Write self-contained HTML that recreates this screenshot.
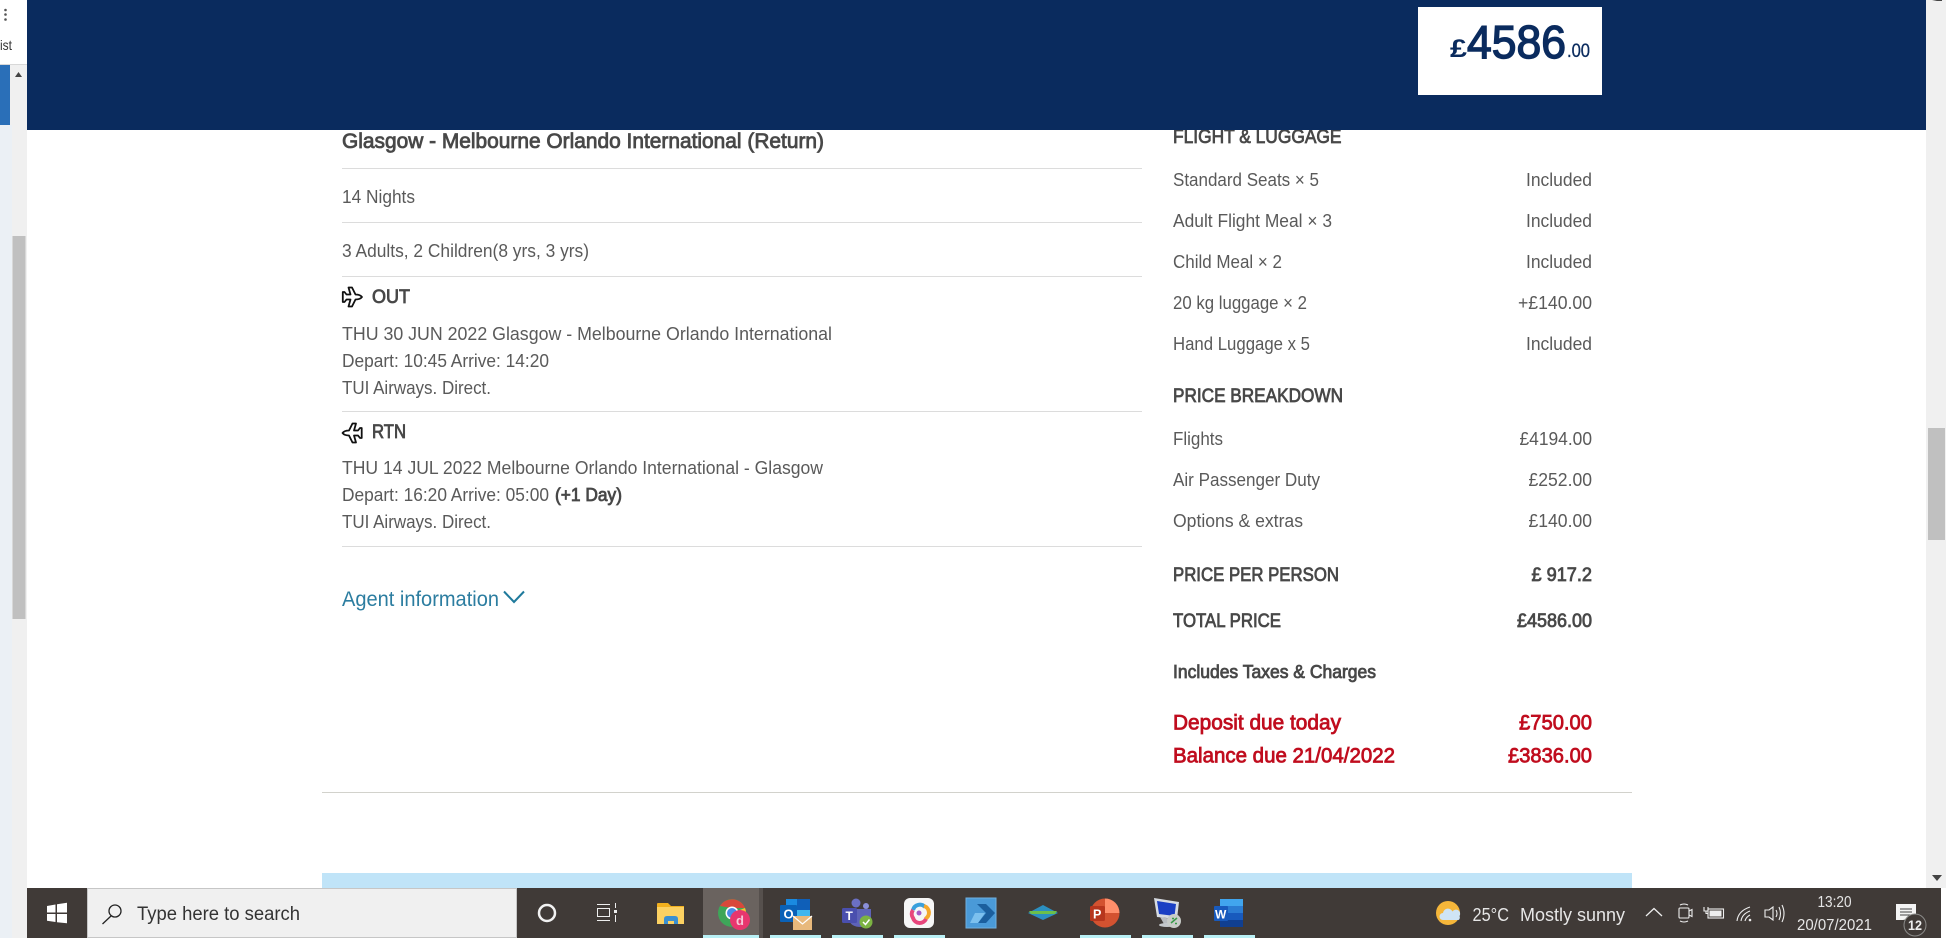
<!DOCTYPE html>
<html><head><meta charset="utf-8"><title>Booking summary</title>
<style>
html,body{margin:0;padding:0;background:#fff;width:1946px;height:938px;overflow:hidden}
svg{display:block}
text{font-family:"Liberation Sans",sans-serif;fill:#5a5a5a;font-size:18px}
.b{fill:#484848;stroke:#484848;stroke-width:.8px}
.r{fill:#c00d1e;stroke:#c00d1e;stroke-width:.8px;font-size:21.500px}
.t{fill:#e6e6e6}
.ic{filter:blur(.35px)}
</style></head><body>
<svg xmlns="http://www.w3.org/2000/svg" width="1946" height="938" viewBox="0 0 1946 938">
<rect width="1946" height="938" fill="#fff"/>
<!-- left strip -->
<rect x="0" y="64" width="27" height="874" fill="#f0f0f0"/>
<rect x="0" y="125" width="12" height="813" fill="#ebf0f5"/>
<rect x="0" y="64" width="27" height="1" fill="#d8d8d8"/>
<rect x="0" y="65" width="10" height="60" fill="#2a6fb8"/>
<path d="M15 77L18.500 72L22 77Z" fill="#444"/>
<rect x="12.500" y="236" width="13" height="383" fill="#c0c0c0"/>
<circle cx="5.500" cy="10" r="1.300" fill="#555"/><circle cx="5.500" cy="14.500" r="1.300" fill="#555"/><circle cx="5.500" cy="19.500" r="1.300" fill="#555"/>
<text x="0" y="50" style="font-size:14px;fill:#333" textLength="12" lengthAdjust="spacingAndGlyphs">ist</text>
<!-- right scrollbar -->
<rect x="1926" y="0" width="20" height="938" fill="#f0f0f0"/>
<rect x="1928" y="428" width="17" height="112" fill="#c0c0c0"/>
<path d="M1932 1L1937 0H1942V1Z" fill="#444"/>
<path d="M1932 875L1942 875L1937 881Z" fill="#444"/>

<!-- left column -->
<text class="b" x="342" y="148" style="font-size:21px" textLength="482" lengthAdjust="spacingAndGlyphs">Glasgow - Melbourne Orlando International (Return)</text>
<g fill="#dcdcdc">
<rect x="342" y="168" width="800" height="1"/><rect x="342" y="222" width="800" height="1"/><rect x="342" y="276" width="800" height="1"/><rect x="342" y="411" width="800" height="1"/><rect x="342" y="546" width="800" height="1"/>
</g>
<text x="342" y="203" textLength="73" lengthAdjust="spacingAndGlyphs">14 Nights</text>
<text x="342" y="257" textLength="247" lengthAdjust="spacingAndGlyphs">3 Adults, 2 Children(8 yrs, 3 yrs)</text>
<path transform="translate(342 287)" d="M20 10C18.500 8 15.500 7.500 13.500 7.500L10 .5H6.500L8.500 7.500H4.500L2.500 5H.8V15H2.500L4.500 12.500H8.500L6.500 19.500H10L13.500 12.500C15.500 12.500 18.500 12 20 10Z" fill="#fff" stroke="#111" stroke-width="1.800" stroke-linejoin="round"/>
<text class="b" x="372" y="303" style="font-size:19px" textLength="38" lengthAdjust="spacingAndGlyphs">OUT</text>
<text x="342" y="340" textLength="490" lengthAdjust="spacingAndGlyphs">THU 30 JUN 2022 Glasgow  - Melbourne Orlando International</text>
<text x="342" y="367" textLength="207" lengthAdjust="spacingAndGlyphs">Depart: 10:45 Arrive: 14:20</text>
<text x="342" y="394" textLength="149" lengthAdjust="spacingAndGlyphs">TUI Airways. Direct.</text>
<path transform="translate(362.500 423) scale(-1 1)" d="M20 10C18.500 8 15.500 7.500 13.500 7.500L10 .5H6.500L8.500 7.500H4.500L2.500 5H.8V15H2.500L4.500 12.500H8.500L6.500 19.500H10L13.500 12.500C15.500 12.500 18.500 12 20 10Z" fill="#fff" stroke="#111" stroke-width="1.800" stroke-linejoin="round"/>
<text class="b" x="372" y="438" style="font-size:19px" textLength="34" lengthAdjust="spacingAndGlyphs">RTN</text>
<text x="342" y="474" textLength="481" lengthAdjust="spacingAndGlyphs">THU 14 JUL 2022 Melbourne Orlando International - Glasgow</text>
<text x="342" y="501" textLength="207" lengthAdjust="spacingAndGlyphs">Depart: 16:20 Arrive: 05:00</text>
<text class="b" x="555" y="501" textLength="67" lengthAdjust="spacingAndGlyphs">(+1 Day)</text>
<text x="342" y="528" textLength="149" lengthAdjust="spacingAndGlyphs">TUI Airways. Direct.</text>
<text x="342" y="606" style="font-size:21px;fill:#2c7da0" textLength="157" lengthAdjust="spacingAndGlyphs">Agent information</text>
<path d="M504 591.500L514 602L524 591.500" fill="none" stroke="#1f7a9c" stroke-width="2"/>

<!-- right column -->
<text class="b" x="1173" y="143" style="font-size:19.500px" textLength="168.500" lengthAdjust="spacingAndGlyphs">FLIGHT &amp; LUGGAGE</text>
<text x="1173" y="186" textLength="146" lengthAdjust="spacingAndGlyphs">Standard Seats × 5</text>
<text x="1526" y="186" textLength="66" lengthAdjust="spacingAndGlyphs">Included</text>
<text x="1173" y="227" textLength="159" lengthAdjust="spacingAndGlyphs">Adult Flight Meal × 3</text>
<text x="1526" y="227" textLength="66" lengthAdjust="spacingAndGlyphs">Included</text>
<text x="1173" y="268" textLength="109" lengthAdjust="spacingAndGlyphs">Child Meal × 2</text>
<text x="1526" y="268" textLength="66" lengthAdjust="spacingAndGlyphs">Included</text>
<text x="1173" y="309" textLength="134" lengthAdjust="spacingAndGlyphs">20 kg luggage × 2</text>
<text x="1518" y="309" textLength="74" lengthAdjust="spacingAndGlyphs">+£140.00</text>
<text x="1173" y="350" textLength="137" lengthAdjust="spacingAndGlyphs">Hand Luggage x 5</text>
<text x="1526" y="350" textLength="66" lengthAdjust="spacingAndGlyphs">Included</text>
<text class="b" x="1173" y="402" style="font-size:19.500px" textLength="170" lengthAdjust="spacingAndGlyphs">PRICE BREAKDOWN</text>
<text x="1173" y="445" textLength="50" lengthAdjust="spacingAndGlyphs">Flights</text>
<text x="1519.500" y="445" textLength="72.500" lengthAdjust="spacingAndGlyphs">£4194.00</text>
<text x="1173" y="486" textLength="147" lengthAdjust="spacingAndGlyphs">Air Passenger Duty</text>
<text x="1528.500" y="486" textLength="63.500" lengthAdjust="spacingAndGlyphs">£252.00</text>
<text x="1173" y="527" textLength="130" lengthAdjust="spacingAndGlyphs">Options &amp; extras</text>
<text x="1528.500" y="527" textLength="63.500" lengthAdjust="spacingAndGlyphs">£140.00</text>
<text class="b" x="1173" y="581" style="font-size:19.500px" textLength="166" lengthAdjust="spacingAndGlyphs">PRICE PER PERSON</text>
<text class="b" x="1531.500" y="581" style="font-size:19.500px" textLength="60.500" lengthAdjust="spacingAndGlyphs">£ 917.2</text>
<text class="b" x="1173" y="627" style="font-size:19.500px" textLength="108" lengthAdjust="spacingAndGlyphs">TOTAL PRICE</text>
<text class="b" x="1517" y="627" style="font-size:19.500px" textLength="75" lengthAdjust="spacingAndGlyphs">£4586.00</text>
<text class="b" x="1173" y="678" style="font-size:18px" textLength="203" lengthAdjust="spacingAndGlyphs">Includes Taxes &amp; Charges</text>
<text class="r" x="1173" y="729.500" textLength="168" lengthAdjust="spacingAndGlyphs">Deposit due today</text>
<text class="r" x="1519" y="729.500" textLength="73" lengthAdjust="spacingAndGlyphs">£750.00</text>
<text class="r" x="1173" y="762.500" textLength="222" lengthAdjust="spacingAndGlyphs">Balance due 21/04/2022</text>
<text class="r" x="1508" y="762.500" textLength="84" lengthAdjust="spacingAndGlyphs">£3836.00</text>
<rect x="322" y="792" width="1310" height="1" fill="#d2d2cc"/>
<rect x="322" y="873" width="1310" height="15" fill="#c0e4f8"/>

<!-- navy header -->
<rect x="27" y="0" width="1899" height="130" fill="#0a2b5e"/>
<rect x="1418" y="7" width="184" height="88" fill="#fff"/>
<text x="1450" y="57" style="font-size:25px;font-weight:bold;fill:#0a2b5e" textLength="17" lengthAdjust="spacingAndGlyphs">£</text>
<text x="1467" y="58" style="font-size:46px;fill:#0a2b5e;stroke:#0a2b5e;stroke-width:1.400px" textLength="99" lengthAdjust="spacingAndGlyphs">4586</text>
<text x="1567" y="57" style="font-size:19px;fill:#0a2b5e;stroke:#0a2b5e;stroke-width:.3px" textLength="23" lengthAdjust="spacingAndGlyphs">.00</text>

<!-- taskbar -->
<rect x="27" y="888" width="1914" height="50" fill="#403a37"/>
<rect x="1941" y="888" width="5" height="50" fill="#fff"/>
<path d="M47 906L55.500 904.500V912.500H47ZM57 904.300L67 902.800V912.500H57ZM47 914H55.500V922L47 920.700ZM57 914H67V923.300L57 922.200Z" fill="#fff"/>
<rect x="87.500" y="888.500" width="429" height="49" fill="#f0f0f0" stroke="#c6c6c6"/>
<circle cx="115" cy="911" r="6" fill="none" stroke="#222" stroke-width="1.300"/>
<path d="M111 916L102.500 924" stroke="#222" stroke-width="1.300"/>
<text x="137" y="920" style="font-size:19px;fill:#333" textLength="163" lengthAdjust="spacingAndGlyphs">Type here to search</text>
<circle cx="547" cy="913" r="8" fill="none" stroke="#f2f2f2" stroke-width="2.500"/>
<g fill="none" stroke="#eee" stroke-width="1"><rect x="597.500" y="908.500" width="12" height="8"/><path d="M597 904.500H610M597 920.500H610M615.500 903V908M615.500 915V922"/></g>
<rect x="614" y="910" width="3" height="3" fill="#eee"/>
<g class="ic">
<!-- explorer -->
<path d="M657 904a1 1 0 0 1 1-1H668L671 906H684V924H657Z" fill="#f2b01e"/>
<rect x="657" y="907" width="27" height="17" fill="#fcd162"/>
<path d="M664 924V919Q664 916 667 916H675Q678 916 678 919V924H674V921H668V924Z" fill="#3a8fd0"/>
<!-- highlight chrome -->
<rect x="703" y="888" width="56" height="50" fill="#6a635f"/>
<rect x="759" y="888" width="4" height="50" fill="#56504d"/>
<circle cx="732" cy="913" r="14" fill="#3ea659"/>
<path d="M720 906A14 14 0 0 1 745 908L732 908Z" fill="#d9483b"/>
<path d="M745 908A14 14 0 0 1 740 925L732 913Z" fill="#f6c533"/>
<circle cx="732" cy="913" r="6.500" fill="#fff"/><circle cx="732" cy="913" r="5" fill="#4a8ce8"/>
<circle cx="740" cy="920" r="10" fill="#e8366e"/>
<text x="736" y="925" style="font-size:13px;fill:#f5c8d8;font-weight:bold">d</text>
<!-- outlook -->
<rect x="786" y="899" width="24" height="22" fill="#1a8ae0"/>
<rect x="797" y="899" width="13" height="11" fill="#0f5fb8"/><rect x="797" y="910" width="13" height="11" fill="#3fb6ee"/>
<rect x="780" y="905" width="17" height="17" fill="#0a62b8" rx="1"/>
<text x="783.500" y="918.500" style="font-size:13px;fill:#fff;font-weight:bold">O</text>
<rect x="793" y="916" width="19" height="14" fill="#e8b97c"/>
<path d="M793 916L802.500 924L812 916" fill="none" stroke="#fff" stroke-width="1.200"/>
<!-- teams -->
<circle cx="856" cy="903" r="4.500" fill="#6b70c4"/><circle cx="866" cy="906" r="3" fill="#8a8fd8"/>
<path d="M849 909H871V920Q871 927 861 927Q851 927 849 920Z" fill="#5e63b8"/>
<rect x="842" y="908" width="15" height="15" rx="1.500" fill="#4a4fae"/>
<text x="845.500" y="920" style="font-size:12px;fill:#fff;font-weight:bold">T</text>
<circle cx="866" cy="922" r="6.500" fill="#7cb342"/>
<path d="M863 922L865.500 924.500L869.500 919.500" fill="none" stroke="#fff" stroke-width="1.500"/>
<!-- white app -->
<rect x="904" y="898" width="30" height="30" rx="6" fill="#f6f6f6"/>
<path d="M913 910A7 7 0 0 1 925 907" fill="none" stroke="#3aa0dc" stroke-width="4"/>
<path d="M924 906A7 7 0 0 1 925 919" fill="none" stroke="#f4a82c" stroke-width="4"/>
<path d="M926 919A7 7 0 0 1 913 918A7 7 0 0 1 913 910" fill="none" stroke="#e8467c" stroke-width="4"/>
<circle cx="919" cy="913" r="2.500" fill="#a45ac8"/>
<!-- blue arrow -->
<rect x="966" y="898" width="30" height="30" fill="#4a9ad8" stroke="#6fb0e0"/>
<path d="M977 904H986L995 913L986 923H978L986 913Z" fill="#1b5f9e"/>
<path d="M975 913H985L978 923H970Z" fill="#7cc0ee"/>
<!-- teal diamond -->
<path d="M1028 913L1043 905L1058 913L1043 920Z" fill="#2b8fc0"/>
<path d="M1029 911H1057L1055 914H1031Z" fill="#6cc04a"/>
<!-- ppt -->
<circle cx="1105" cy="913" r="14.500" fill="#d35230"/>
<path d="M1105 898.500A14.500 14.500 0 0 1 1119.500 913H1105Z" fill="#ff8f6b"/>
<rect x="1090" y="906" width="15" height="15" rx="1.500" fill="#b7361d"/>
<text x="1093" y="918.500" style="font-size:12.500px;fill:#fff;font-weight:bold">P</text>
<!-- remote desktop -->
<path d="M1154 898L1179 902L1177 919L1157 917Z" fill="#d6dbe2"/>
<path d="M1157 901L1176 904L1174.500 916L1159 914Z" fill="#1a3fc4"/>
<path d="M1160 917L1172 919L1171 924H1164Z" fill="#b8bcc0"/>
<ellipse cx="1167" cy="925" rx="8" ry="2" fill="#c4c8cc"/>
<circle cx="1174" cy="921" r="7" fill="#c8ccc8"/>
<path d="M1171 923L1177 918M1172 918.500H1174M1175 923.500H1177" stroke="#3a9a4a" stroke-width="1.500"/>
<!-- word -->
<rect x="1220" y="899" width="23" height="28" rx="1.500" fill="#2b7cd3"/>
<rect x="1220" y="899" width="23" height="7" fill="#41a5ee"/><rect x="1220" y="913" width="23" height="7" fill="#185abd"/><rect x="1220" y="920" width="23" height="7" fill="#103f91"/>
<rect x="1214" y="906" width="14" height="15" rx="1" fill="#185abd"/>
<text x="1215" y="918.500" style="font-size:12px;fill:#fff;font-weight:bold">W</text>
</g>
<!-- running underlines -->
<g fill="#b9f0f5">
<rect x="703" y="935" width="56" height="3"/><rect x="770" y="935" width="51" height="3"/><rect x="832" y="935" width="51" height="3"/><rect x="894" y="935" width="51" height="3"/>
<rect x="1080" y="935" width="51" height="3"/><rect x="1142" y="935" width="51" height="3"/><rect x="1204" y="935" width="51" height="3"/>
</g>
<!-- tray -->
<circle cx="1448" cy="913" r="12" fill="#f5b63a"/>
<path d="M1443 920a3.500 3.500 0 0 1 0-7 5 5 0 0 1 9.500-1.500 4 4 0 0 1 7 4.500 3 3 0 0 1-1 4Z" fill="#cfe4f4"/>
<text class="t" x="1472.500" y="921" style="font-size:18.500px" textLength="36.500" lengthAdjust="spacingAndGlyphs">25°C</text>
<text class="t" x="1520" y="921" style="font-size:18.500px" textLength="105" lengthAdjust="spacingAndGlyphs">Mostly sunny</text>
<path d="M1646 916L1654 908.500L1662 916" fill="none" stroke="#eee" stroke-width="1.300"/>
<g fill="none" stroke="#eee" stroke-width="1.100">
<rect x="1679" y="908" width="10" height="10" rx="1"/><path d="M1689 911L1692 909.500V916.500L1689 915M1680 905Q1684 903 1688 905M1680 921Q1684 923 1688 921"/>
<rect x="1708" y="909" width="15.500" height="9" /><path d="M1704 907V911H1708V907M1706 911V913.500H1708"/>
<path d="M1737 921Q1738 911 1750 907M1741 921Q1742 914 1750 911M1745 921Q1746 917 1750 915"/>
<path d="M1765 910V917H1769L1773 920V907L1769 910ZM1776 910Q1778 913.500 1776 917M1779 907Q1782 913.500 1779 920M1782 905Q1786 913.500 1782 922"/>
</g>
<rect x="1709.500" y="910.500" width="12" height="6" fill="#eee"/>
<circle cx="1750" cy="920" r="1.300" fill="#eee"/>
<text class="t" x="1817.500" y="907" style="font-size:16px" textLength="34" lengthAdjust="spacingAndGlyphs">13:20</text>
<text class="t" x="1797" y="930" style="font-size:16px" textLength="75" lengthAdjust="spacingAndGlyphs">20/07/2021</text>
<path d="M1896 904H1916V919H1908L1903 920H1896Z" fill="#f4f4f4"/>
<path d="M1900 909H1912M1900 912H1912M1900 915H1912" stroke="#444" stroke-width="1"/>
<circle cx="1915" cy="925" r="11" fill="#403a37" stroke="#8a8a88"/>
<text x="1908" y="930" style="font-size:14px;font-weight:bold;fill:#eee" textLength="14" lengthAdjust="spacingAndGlyphs">12</text>
</svg>
</body></html>
